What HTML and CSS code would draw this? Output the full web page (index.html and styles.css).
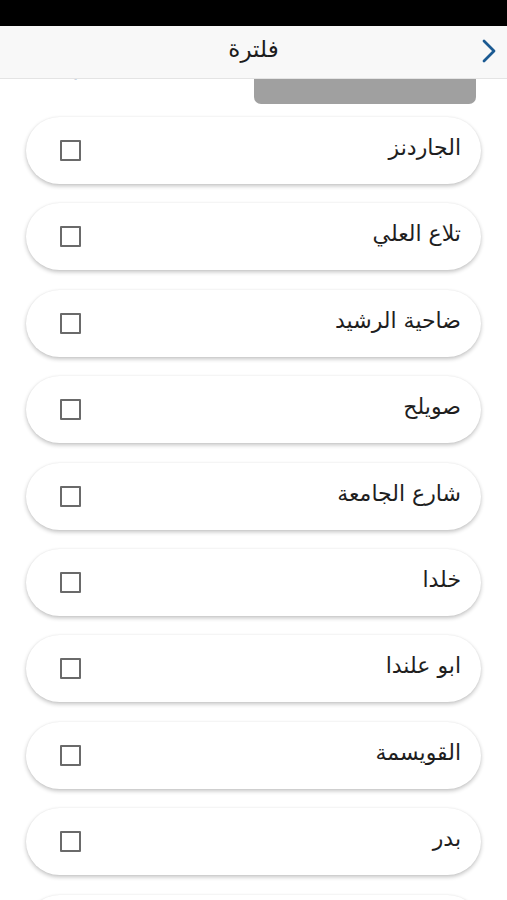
FILE: index.html
```html
<!DOCTYPE html>
<html lang="ar" dir="rtl">
  <head>
    <title>فلترة</title>
    <meta charset="UTF-8">
    <meta name="viewport" content="width=device-width, initial-scale=1.0">
    <link rel="stylesheet" href="styles.css">
  </head>
  <body>
    <div class="statusbar"></div>
    <div class="header">
      <span class="title">فلترة</span>
      <svg class="back" width="18" height="26" viewBox="0 0 18 26">
        <path d="M4 3 L14 13 L4 23" fill="none" stroke="#1b5a92" stroke-width="2.8" stroke-linecap="round" stroke-linejoin="round"/>
      </svg>
    </div>
    <div class="toolbar">
      <div class="apply"><span>تطبيق</span></div>
      <div class="reset"><span>إعادة تعيين</span></div>
    </div>
    <div class="list">
      <label class="item"><span class="name">الجاردنز</span><span class="box"></span></label>
      <label class="item"><span class="name">تلاع العلي</span><span class="box"></span></label>
      <label class="item"><span class="name">ضاحية الرشيد</span><span class="box"></span></label>
      <label class="item"><span class="name">صويلح</span><span class="box"></span></label>
      <label class="item"><span class="name">شارع الجامعة</span><span class="box"></span></label>
      <label class="item"><span class="name">خلدا</span><span class="box"></span></label>
      <label class="item"><span class="name">ابو علندا</span><span class="box"></span></label>
      <label class="item"><span class="name">القويسمة</span><span class="box"></span></label>
      <label class="item"><span class="name">بدر</span><span class="box"></span></label>
      <label class="item"><span class="name">الهاشمي</span><span class="box"></span></label>
    </div>
  </body>
</html>
```
FILE: styles.css
```css
body {
  margin: 0;
  height: 900px;
  overflow: hidden;
  background: white;
  font-family: "DejaVu Sans", sans-serif;
}

.statusbar {
  height: 26px;
  background: black;
}

.header {
  height: 52px;
  background: #f8f8f8;
  border-bottom: 1px solid #e4e4e4;
  position: relative;
  display: flex;
  align-items: center;
  justify-content: center;
}

.title {
  font-size: 23px;
  color: #1c1c1c;
  margin-top: -6px;
}

.back {
  position: absolute;
  right: 9px;
  top: 12px;
}

.toolbar {
  height: 25px;
  display: flex;
  padding: 0 31px 0 47px;
  justify-content: space-between;
  overflow: hidden;
}

.apply {
  width: 222px;
  height: 25px;
  background: #a0a0a0;
  border-radius: 0 0 7px 7px;
  display: flex;
  justify-content: center;
  overflow: hidden;
}

.apply span {
  color: white;
  font-size: 18px;
  margin-top: -23px;
}

.reset {
  width: 120px;
  overflow: hidden;
  display: flex;
  justify-content: center;
}

.reset span {
  color: #1b5a92;
  font-size: 16px;
  margin-top: -19px;
}

.list {
  padding: 13px 26px 0;
  display: flex;
  flex-direction: column;
  gap: 19.4px;
}

.item {
  height: 67px;
  flex-shrink: 0;
  border-radius: 34px;
  background: white;
  box-shadow: 0 2px 4px rgba(0, 0, 0, 0.24), 0 0 2px rgba(0, 0, 0, 0.05);
  display: flex;
  align-items: center;
  justify-content: space-between;
  padding: 0 20px 0 34px;
}

.name {
  font-size: 22px;
  color: #1e1e1e;
  margin-top: -6px;
}

.box {
  width: 17px;
  height: 17px;
  border: 2px solid #6a6a6a;
  border-radius: 1px;
}
```
